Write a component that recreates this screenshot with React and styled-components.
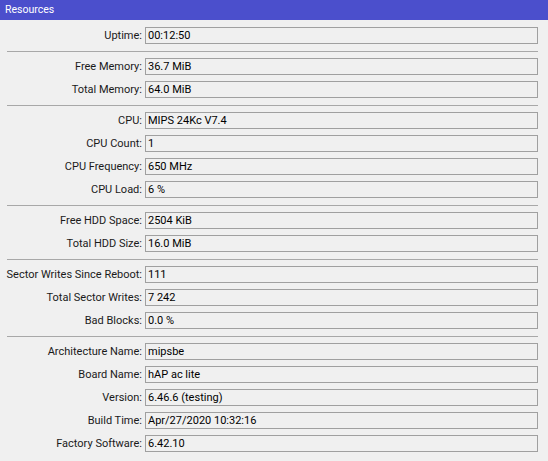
import React from 'react';
import styled, { createGlobalStyle } from 'styled-components';

const groups = [
  [['Uptime', '00:12:50']],
  [
    ['Free Memory', '36.7 MiB'],
    ['Total Memory', '64.0 MiB'],
  ],
  [
    ['CPU', 'MIPS 24Kc V7.4'],
    ['CPU Count', '1'],
    ['CPU Frequency', '650 MHz'],
    ['CPU Load', '6 %'],
  ],
  [
    ['Free HDD Space', '2504 KiB'],
    ['Total HDD Size', '16.0 MiB'],
  ],
  [
    ['Sector Writes Since Reboot', '111'],
    ['Total Sector Writes', '7 242'],
    ['Bad Blocks', '0.0 %'],
  ],
  [
    ['Architecture Name', 'mipsbe'],
    ['Board Name', 'hAP ac lite'],
    ['Version', '6.46.6 (testing)'],
    ['Build Time', 'Apr/27/2020 10:32:16'],
    ['Factory Software', '6.42.10'],
  ],
];

const App = () => (
  <>
    <GlobalStyle />
    <Window>
      <TitleBar>Resources</TitleBar>
      <Content>
        {groups.map((rows, gi) => (
          <React.Fragment key={gi}>
            {gi > 0 && <Separator />}
            {rows.map(([label, value]) => (
              <Row key={label}>
                <Label>{label}:</Label>
                <Field>{value}</Field>
              </Row>
            ))}
          </React.Fragment>
        ))}
      </Content>
    </Window>
  </>
);

export default App;

const GlobalStyle = createGlobalStyle`
  html, body {
    margin: 0;
    padding: 0;
    background: #f0f0f0;
  }
  body {
    font-family: Roboto, "Liberation Sans", Arial, sans-serif;
    font-size: 11px;
    color: #000;
  }
`;

const Window = styled.div`
  width: 548px;
  height: 461px;
  background: #f0f0f0;
  overflow: hidden;
`;

const TitleBar = styled.div`
  height: 20px;
  line-height: 20px;
  padding-left: 5px;
  background: #4b4fcc;
  color: #fff;
  font-size: 10.5px;
`;

const Content = styled.div`
  padding-top: 4px;
  padding-right: 10px;
`;

const Row = styled.div`
  display: flex;
  align-items: center;
  height: 23px;
`;

const Label = styled.div`
  width: 142px;
  flex: 0 0 142px;
  text-align: right;
  white-space: nowrap;
  color: #1a1a1a;
`;

const Field = styled.div`
  margin-left: 3px;
  flex: 1;
  height: 15px;
  line-height: 15px;
  border: 1px solid #a0a0a0;
  padding-left: 2px;
  white-space: nowrap;
`;

const Separator = styled.div`
  height: 8px;
  display: flex;
  align-items: flex-start;
  padding-left: 7px;
  &::before {
    content: '';
    flex: 1;
    margin-top: 4px;
    height: 1px;
    background: #a8a8a8;
  }
`;
